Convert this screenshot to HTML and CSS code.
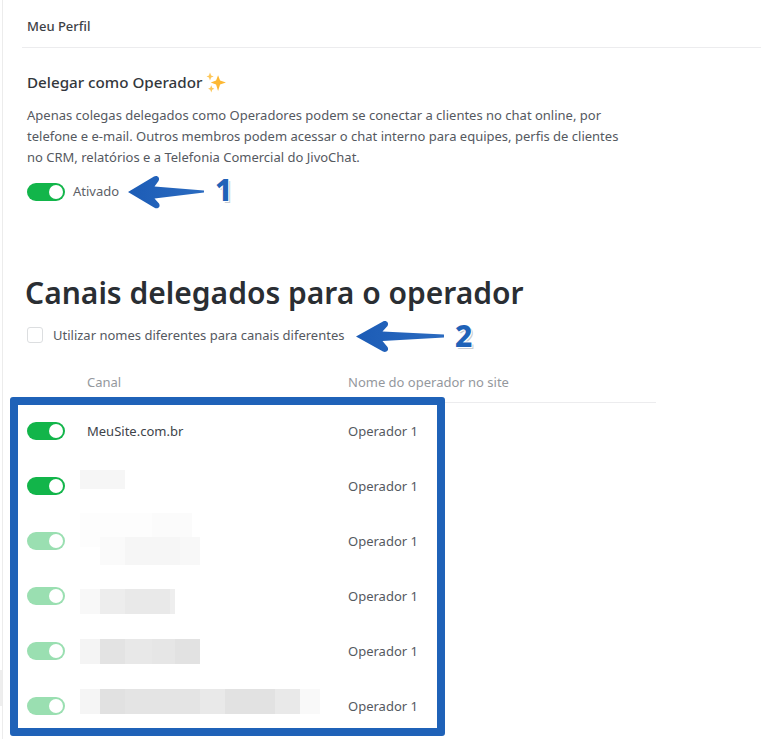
FILE: index.html
```html
<!DOCTYPE html>
<html lang="pt-BR">
<head>
<meta charset="utf-8">
<title>Canais delegados</title>
<link rel="stylesheet" href="styles.css">
</head>
<body>
<div class="page">
  <header class="topbar"><span class="topbar-title">Meu Perfil</span></header>
  <section class="delegate">
    <h2 class="delegate-title">Delegar como Operador
      <svg class="sparkle" viewBox="0 0 20 20" width="21" height="21" aria-hidden="true">
        <path fill="#fdb833" d="M11.5 3 13.400 8.100 19 10 13.400 11.900 11.500 18 9.600 11.900 4.500 10 9.600 8.100Z"/>
        <path fill="#fdc75a" d="M3.800 .5 4.900 3.300 7.300 4.200 4.900 5.300 3.800 8 2.800 5.300 .5 4.200 2.800 3.300Z"/>
        <path fill="#fdc75a" d="M5 12.500 5.900 15 8 15.900 5.900 16.800 5 19.500 4.100 16.800 2 15.900 4.100 15Z"/>
      </svg>
    </h2>
    <p class="delegate-text">Apenas colegas delegados como Operadores podem se conectar a clientes no chat online, por telefone e e-mail. Outros membros podem acessar o chat interno para equipes, perfis de clientes no CRM, relatórios e a Telefonia Comercial do JivoChat.</p>
    <div class="status-row"><span class="toggle"></span><span class="status-label">Ativado</span></div>
  </section>
  <h1 class="channels-title">Canais delegados para o operador</h1>
  <label class="check-row"><span class="checkbox"></span><span>Utilizar nomes diferentes para canais diferentes</span></label>
  <div class="table">
    <div class="table-head"><span class="col-channel">Canal</span><span class="col-name">Nome do operador no site</span></div>
    <div class="row"><span class="toggle"></span><span class="col-channel">MeuSite.com.br</span><span class="col-name">Operador 1</span></div>
    <div class="row"><span class="toggle"></span><span class="col-channel"><span class="mask mask-a"></span></span><span class="col-name">Operador 1</span></div>
    <div class="row"><span class="toggle faded"></span><span class="col-channel"><span class="mask mask-b"></span></span><span class="col-name">Operador 1</span></div>
    <div class="row"><span class="toggle faded"></span><span class="col-channel"><span class="mask mask-c"></span></span><span class="col-name">Operador 1</span></div>
    <div class="row"><span class="toggle faded"></span><span class="col-channel"><span class="mask mask-d"></span></span><span class="col-name">Operador 1</span></div>
    <div class="row"><span class="toggle faded"></span><span class="col-channel"><span class="mask mask-e"></span></span><span class="col-name">Operador 1</span></div>
  </div>
</div>

<div class="edge-mark"></div>
<div class="highlight"></div>

<svg class="arrow arrow-one" viewBox="0 0 78 36" width="78" height="36" aria-hidden="true">
  <defs><linearGradient id="arrowFill" x1="0" x2="1" y1="0" y2="0"><stop offset="0" stop-color="#1c5cb6"/><stop offset="1" stop-color="#2b6bc0"/></linearGradient></defs>
  <path fill="url(#arrowFill)" d="M1 18 27 2.500C30 .8 33.500 3.500 31.500 7L27.500 12.500 77 16.500V18.500L27.500 24.500 32 29.500C34 33 30.500 35.500 27.500 33.800Z"/>
</svg>
<span class="callout callout-one">1</span>

<svg class="arrow arrow-two" viewBox="0 0 90 33" width="90" height="33" aria-hidden="true">
  <path fill="url(#arrowFill)" d="M1 16.500 28 1.500C31 0 34.500 2.500 32.500 6L27.500 11.500 89 14.500V17.500L27.500 21 32.500 27C34.500 30.500 31 33 28 31.500Z"/>
</svg>
<span class="callout callout-two">2</span>
</body>
</html>
```
FILE: styles.css
```css
* { box-sizing: border-box; }
html, body { margin: 0; height: 739px; overflow: hidden; background: #fff; }
body {
  position: relative;
  font-family: "Noto Sans", "Open Sans", sans-serif;
  font-size: 13px;
  color: #40444a;
}
.page {
  height: 739px;
  margin-left: 2px;
  padding-left: 19px;
  border-left: 1px solid #ececec;
}
.topbar {
  height: 48px;
  padding: 17px 0 0 5px;
  border-bottom: 1px solid #ececee;
}
.topbar-title { display: block; font-size: 13px; line-height: 18px; font-weight: 500; color: #3d4146; }
.delegate { padding: 22px 0 0 5px; width: 610px; }
.delegate-title {
  display: flex;
  align-items: center;
  gap: 4px;
  margin: 0;
  height: 24px;
  font-size: 15.2px;
  font-weight: 500;
  color: #33373c;
}
.sparkle { flex: none; }
.delegate-text { margin: 11px 0 0; line-height: 21px; color: #55595f; }
.status-row { display: flex; align-items: center; gap: 8px; margin-top: 14px; height: 20px; }
.status-label { margin-bottom: 2px; color: #5d6167; }
.toggle {
  position: relative;
  flex: none;
  display: block;
  width: 38px;
  height: 18px;
  border-radius: 9px;
  background: #12b54a;
}
.toggle::after {
  content: "";
  position: absolute;
  top: 2px;
  right: 2px;
  width: 14px;
  height: 14px;
  border-radius: 50%;
  background: #fff;
}
.toggle.faded { background: #9adfb1; }
.channels-title {
  margin: 69px 0 0 3px;
  height: 44px;
  font-size: 30px;
  line-height: 44px;
  font-weight: 600;
  color: #2a2e33;
  white-space: nowrap;
}
.check-row { display: flex; align-items: center; gap: 10px; margin: 10px 0 0 5px; height: 20px; color: #55595f; }
.checkbox { width: 16px; height: 16px; border: 1px solid #dcdee0; border-radius: 3px; background: #fff; }
.table { margin: 0 0 0 5px; width: 629px; }
.table-head {
  display: flex;
  height: 58px;
  padding: 27px 0 0 60px;
  border-bottom: 1px solid #ececee;
  color: #94989d;
  line-height: 20px;
}
.table-head .col-channel { width: 261px; }
.row { display: flex; align-items: center; height: 55px; }
.row .col-channel { width: 261px; margin-left: 22px; }
.col-name { white-space: nowrap; color: #55595f; }
.table-head .col-name { color: inherit; }
.mask { display: block; height: 25px; margin-left: -7px; }
.mask-a {
  width: 45px;
  height: 19px;
  margin-top: -13px;
  background: #f6f6f6;
}
.mask-b {
  width: 120px;
  height: 52px;
  margin-top: -3px;
  background:
    linear-gradient(#fff 0 0) 0 100% / 20px 18px no-repeat,
    linear-gradient(90deg, #fdfdfd 0 72px, #fbfbfb 72px 112px, #fff 112px) 0 0 / 120px 24px no-repeat,
    linear-gradient(90deg, #fdfdfd 0 20px, #fafafa 20px 45px, #f6f6f6 45px 100px, #f8f8f8 100px) 0 100% / 120px 28px no-repeat;
}
.mask-c {
  width: 95px;
  margin-top: 12px;
  background: linear-gradient(90deg, #f8f8f8 0 20px, #ededed 20px 45px, #e9e9e9 45px 90px, #eeeeee 90px);
}
.mask-d {
  width: 120px;
  margin-top: 2px;
  background: linear-gradient(90deg, #f4f4f4 0 20px, #e3e3e3 20px 45px, #e8e8e8 45px 72px, #e6e6e6 72px 95px, #e2e2e2 95px);
}
.mask-e {
  width: 240px;
  margin-top: -9px;
  background: linear-gradient(90deg, #f5f5f5 0 20px, #e1e1e1 20px 45px, #e4e4e4 45px 120px, #e9e9e9 120px 145px, #e2e2e2 145px 195px, #e9e9e9 195px 220px, #f9f9f9 220px);
}
.edge-mark {
  position: absolute;
  left: 0;
  top: 670px;
  width: 2px;
  height: 36px;
  background: #eeeeee;
}
.highlight {
  position: absolute;
  left: 10px;
  top: 397px;
  width: 435px;
  height: 339px;
  border: 8px solid #1f62b8;
  border-radius: 3px;
}
.arrow { position: absolute; }
.arrow-one { left: 127px; top: 174px; }
.arrow-two { left: 355px; top: 320px; }
.callout {
  position: absolute;
  font-family: "Noto Sans", sans-serif;
  font-size: 30px;
  line-height: 30px;
  font-weight: 800;
  color: #1f62b8;
  text-shadow: 1px 1px 0 #fff, -1px -1px 0 #fff, 2px 2px 0 #c8ccd2;
}
.callout-one { left: 215px; top: 175px; }
.callout-two { left: 455px; top: 321px; }
```
